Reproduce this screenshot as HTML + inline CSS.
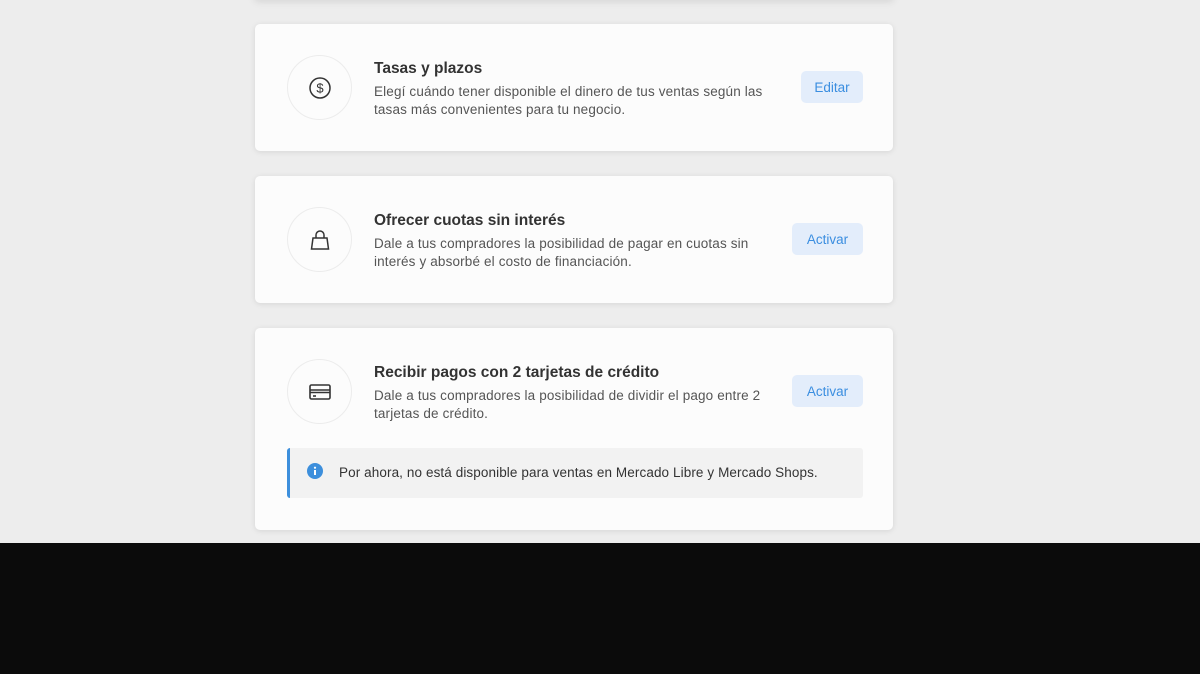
<!DOCTYPE html>
<html><head><meta charset="utf-8"><style>
*{margin:0;padding:0;box-sizing:border-box}
body{width:1200px;height:674px;overflow:hidden;background:#0b0b0b;font-family:"Liberation Sans",sans-serif}
.top{position:absolute;left:0;top:0;width:1200px;height:543px;background:#ededed;overflow:hidden}
.prev{position:absolute;left:255px;top:-40px;width:638px;height:40px;background:#fcfcfc;box-shadow:0 1px 8px rgba(0,0,0,.12)}
.card{position:absolute;left:255px;width:638px;background:#fcfcfc;border-radius:5px;box-shadow:0 1px 6px rgba(0,0,0,.1)}
.ic{position:absolute;left:32px;top:31px;width:65px;height:65px;border:1px solid #ececec;border-radius:50%;display:flex;align-items:center;justify-content:center}
.t{position:absolute;left:119px;top:36px;font-size:15.5px;color:#333;font-weight:bold}
.d{position:absolute;left:119px;top:59px;font-size:13.5px;line-height:18px;color:#555;width:400px;letter-spacing:.15px}
.b{position:absolute;top:47px;height:32px;background:#e3edfb;color:#3b8ee0;font-size:13.5px;border-radius:5px;display:flex;align-items:center;justify-content:center}
.note{position:absolute;left:32px;top:120px;width:576px;height:50px;background:#f2f2f2;border-left:3px solid #3d8fdc;border-radius:3px;font-size:13.5px;color:#333;letter-spacing:.1px}
</style></head><body>
<div class="top">
<div class="prev"></div>
<div class="card" style="top:24px;height:127px">
<div class="ic"><svg width="24" height="24" viewBox="0 0 24 24" fill="none" stroke="#333" stroke-width="1.5"><circle cx="12" cy="12" r="10"/><text x="12" y="16.5" text-anchor="middle" font-size="13" font-family="Liberation Sans" fill="#333" stroke="none">$</text></svg></div>
<div class="t">Tasas y plazos</div>
<div class="d">Elegí cuándo tener disponible el dinero de tus ventas según las tasas más convenientes para tu negocio.</div>
<div class="b" style="left:546px;width:62px">Editar</div>
</div>
<div class="card" style="top:176px;height:127px">
<div class="ic"><svg width="24" height="24" viewBox="0 0 24 24" fill="none" stroke="#333" stroke-width="1.5"><path d="M5 10h14l1.5 11h-17z"/><path d="M8 10V7a4 4 0 0 1 8 0v3"/></svg></div>
<div class="t">Ofrecer cuotas sin interés</div>
<div class="d">Dale a tus compradores la posibilidad de pagar en cuotas sin interés y absorbé el costo de financiación.</div>
<div class="b" style="left:537px;width:71px">Activar</div>
</div>
<div class="card" style="top:328px;height:202px">
<div class="ic"><svg width="24" height="20" viewBox="0 0 24 20" fill="none" stroke="#333" stroke-width="1.6"><rect x="2" y="3" width="20" height="14" rx="1.5"/><path d="M2 8h20M2 10.5h20" /><path d="M5 14h3"/></svg></div>
<div class="t">Recibir pagos con 2 tarjetas de crédito</div>
<div class="d">Dale a tus compradores la posibilidad de dividir el pago entre 2 tarjetas de crédito.</div>
<div class="b" style="left:537px;width:71px">Activar</div>
<div class="note"><svg style="position:absolute;left:17px;top:15px" width="16" height="16" viewBox="0 0 16 16"><circle cx="8" cy="8" r="8" fill="#3d8fdc"/><rect x="7" y="7" width="2" height="5" fill="#fff"/><circle cx="8" cy="4.7" r="1.1" fill="#fff"/></svg><span style="position:absolute;left:49px;top:17px">Por ahora, no está disponible para ventas en Mercado Libre y Mercado Shops.</span></div>
</div>
</div>
</body></html>
